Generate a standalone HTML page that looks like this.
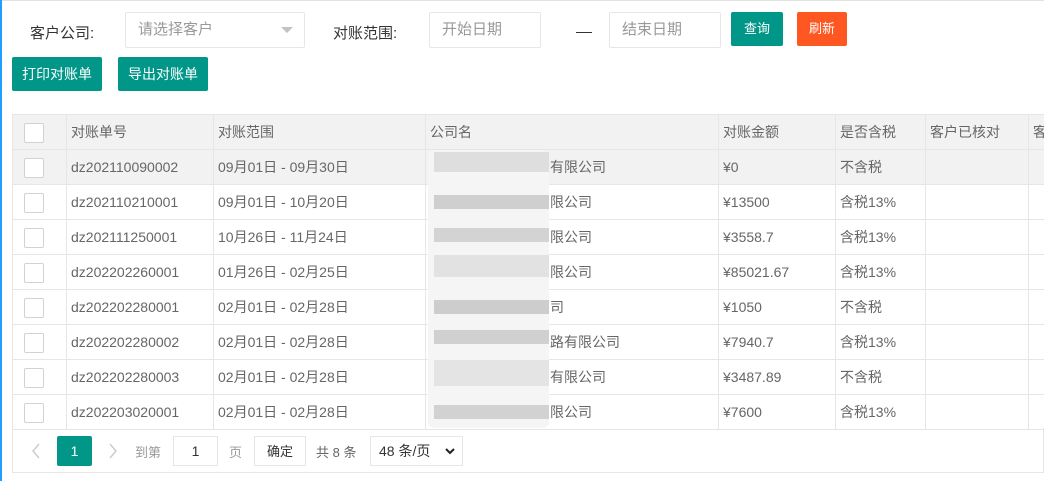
<!DOCTYPE html>
<html><head><meta charset="utf-8"><style>
*{margin:0;padding:0;box-sizing:border-box}
body{width:1044px;height:481px;overflow:hidden;background:#fff;font-family:"Liberation Sans","Noto Sans CJK SC",sans-serif;position:relative;color:#666;font-size:14px}
.a{position:absolute}
.inp{position:absolute;border:1px solid #e6e6e6;border-radius:2px;height:36px;color:#999;font-size:15px;line-height:34px;padding-left:12px;background:#fff}
.btn{position:absolute;color:#fff;border-radius:2px;font-size:14px;text-align:center}
table{position:absolute;left:12px;top:114px;border-collapse:collapse;table-layout:fixed;width:1040px}
td{border:1px solid #e6e6e6;height:35px;padding:0 0 0 4px;line-height:33px;white-space:nowrap;overflow:hidden;font-size:14px;color:#666}
tr.h td,tr.g td{background:#f2f2f2}
.cb{display:inline-block;width:20px;height:20px;border:1px solid #d2d2d2;border-radius:2px;background:#fff;vertical-align:middle;margin-left:7px}
</style></head><body>
<div class="a" style="left:0;top:0;width:1044px;height:1px;background:#e2e2e2"></div>
<div class="a" style="left:0;top:0;width:2px;height:481px;background:#1e9fff"></div>
<div class="a" style="left:30px;top:22px;font-size:15px;color:#333">客户公司:</div>
<div class="inp" style="left:125px;top:12px;width:180px">请选择客户</div>
<div class="a" style="left:281px;top:27px;width:0;height:0;border-left:6px solid transparent;border-right:6px solid transparent;border-top:6px solid #c2c2c2"></div>
<div class="a" style="left:333px;top:22px;font-size:15px;color:#333">对账范围:</div>
<div class="inp" style="left:429px;top:12px;width:112px">开始日期</div>
<div class="a" style="left:576px;top:32px;width:16px;height:1px;background:#333"></div>
<div class="inp" style="left:609px;top:12px;width:112px">结束日期</div>
<div class="btn" style="left:731px;top:12px;width:52px;height:34px;line-height:34px;background:#009688;font-size:13px">查询</div>
<div class="btn" style="left:797px;top:12px;width:50px;height:34px;line-height:34px;background:#ff5722;font-size:13px">刷新</div>
<div class="btn" style="left:12px;top:57px;width:90px;height:34px;line-height:34px;background:#009688">打印对账单</div>
<div class="btn" style="left:118px;top:57px;width:90px;height:34px;line-height:34px;background:#009688">导出对账单</div>
<table>
<colgroup><col style="width:54px"><col style="width:147px"><col style="width:212px"><col style="width:293px"><col style="width:117px"><col style="width:90px"><col style="width:103px"><col style="width:24px"></colgroup>
<tr class="h"><td><span class="cb"></span></td><td>对账单号</td><td>对账范围</td><td>公司名</td><td>对账金额</td><td>是否含税</td><td>客户已核对</td><td>客</td></tr>
<tr class="g"><td><span class="cb"></span></td><td>dz202110090002</td><td>09月01日 - 09月30日</td><td style="padding-left:124px">有限公司</td><td>¥0</td><td>不含税</td><td></td><td></td></tr>
<tr><td><span class="cb"></span></td><td>dz202110210001</td><td>09月01日 - 10月20日</td><td style="padding-left:124px">限公司</td><td>¥13500</td><td>含税13%</td><td></td><td></td></tr>
<tr><td><span class="cb"></span></td><td>dz202111250001</td><td>10月26日 - 11月24日</td><td style="padding-left:124px">限公司</td><td>¥3558.7</td><td>含税13%</td><td></td><td></td></tr>
<tr><td><span class="cb"></span></td><td>dz202202260001</td><td>01月26日 - 02月25日</td><td style="padding-left:124px">限公司</td><td>¥85021.67</td><td>含税13%</td><td></td><td></td></tr>
<tr><td><span class="cb"></span></td><td>dz202202280001</td><td>02月01日 - 02月28日</td><td style="padding-left:124px">司</td><td>¥1050</td><td>不含税</td><td></td><td></td></tr>
<tr><td><span class="cb"></span></td><td>dz202202280002</td><td>02月01日 - 02月28日</td><td style="padding-left:124px">路有限公司</td><td>¥7940.7</td><td>含税13%</td><td></td><td></td></tr>
<tr><td><span class="cb"></span></td><td>dz202202280003</td><td>02月01日 - 02月28日</td><td style="padding-left:124px">有限公司</td><td>¥3487.89</td><td>不含税</td><td></td><td></td></tr>
<tr><td><span class="cb"></span></td><td>dz202203020001</td><td>02月01日 - 02月28日</td><td style="padding-left:124px">限公司</td><td>¥7600</td><td>含税13%</td><td></td><td></td></tr>
</table>
<div class="a" style="left:428px;top:150px;width:121px;height:278px;background:#f5f5f5;border-radius:6px"></div>
<div class="a" style="left:434px;top:152px;width:115px;height:20px;background:#dedede"></div>
<div class="a" style="left:434px;top:195px;width:115px;height:14px;background:#cfcfcf"></div>
<div class="a" style="left:434px;top:228px;width:115px;height:14px;background:#d3d3d3"></div>
<div class="a" style="left:434px;top:255px;width:115px;height:22px;background:#e2e2e2"></div>
<div class="a" style="left:434px;top:300px;width:115px;height:14px;background:#cdcdcd"></div>
<div class="a" style="left:434px;top:330px;width:115px;height:14px;background:#d0d0d0"></div>
<div class="a" style="left:434px;top:360px;width:115px;height:26px;background:#e4e4e4"></div>
<div class="a" style="left:434px;top:405px;width:115px;height:14px;background:#d2d2d2"></div>
<div class="a" style="left:12px;top:428px;width:1032px;height:45px;border:1px solid #e6e6e6;border-top:none"></div>
<svg class="a" style="left:30px;top:442px" width="12" height="18"><path d="M9 2L3 9l6 7" stroke="#ccc" stroke-width="1.5" fill="none"/></svg>
<div class="btn" style="left:57px;top:436px;width:35px;height:30px;line-height:30px;background:#009688">1</div>
<svg class="a" style="left:107px;top:442px" width="12" height="18"><path d="M3 2l6 7-6 7" stroke="#ccc" stroke-width="1.5" fill="none"/></svg>
<div class="a" style="left:135px;top:442px;color:#999;font-size:13px">到第</div>
<div class="a" style="left:173px;top:436px;width:45px;height:30px;border:1px solid #e6e6e6;text-align:center;line-height:28px;color:#333">1</div>
<div class="a" style="left:229px;top:442px;color:#999;font-size:13px">页</div>
<div class="a" style="left:254px;top:436px;width:52px;height:30px;border:1px solid #e6e6e6;text-align:center;line-height:30px;color:#333;font-size:13px">确定</div>
<div class="a" style="left:316px;top:442px;color:#666;font-size:13px">共 8 条</div>
<div class="a" style="left:370px;top:436px;width:93px;height:30px;border:1px solid #e6e6e6;line-height:28px;padding-left:8px;color:#333;font-size:14px">48 条/页</div>
<svg class="a" style="left:444px;top:447px" width="12" height="8"><path d="M2 2l4 4 4-4" stroke="#222" stroke-width="2" fill="none"/></svg>
</body></html>
